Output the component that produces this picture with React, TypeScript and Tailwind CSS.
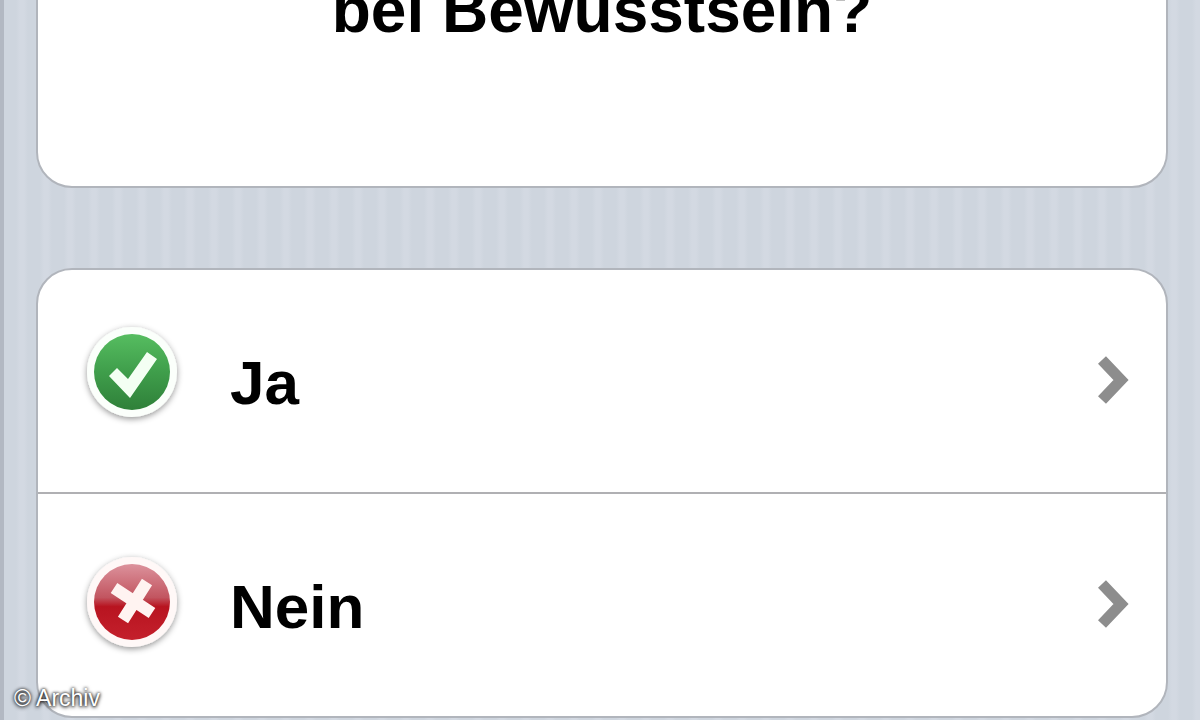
import { ReactNode } from "react";

function CheckIcon() {
  return (
    <svg viewBox="2 7 104 104" className="size-26 shrink-0 overflow-visible" aria-hidden="true">
      <defs>
        <linearGradient id="green" x1="0" y1="0" x2="0" y2="1">
          <stop offset="0" stopColor="#56bd60" />
          <stop offset="0.5" stopColor="#3f9e4b" />
          <stop offset="1" stopColor="#2f8039" />
        </linearGradient>
        <filter id="shadow" x="-20%" y="-20%" width="140%" height="140%">
          <feDropShadow dx="0" dy="2" stdDeviation="3" floodColor="#000" floodOpacity="0.42" />
        </filter>
      </defs>
      <circle cx="52" cy="50" r="45" fill="#fbfffb" filter="url(#shadow)" />
      <circle cx="52" cy="50" r="38" fill="url(#green)" />
      <path d="M29 54 L37 46 L48 57 L67 30 L77 37 L50 76 Z" fill="#f3fff3" />
    </svg>
  );
}

function CrossIcon() {
  return (
    <svg viewBox="2 1 104 104" className="size-26 shrink-0 overflow-visible" aria-hidden="true">
      <defs>
        <linearGradient id="red" x1="0" y1="0" x2="0" y2="1">
          <stop offset="0" stopColor="#dc929c" />
          <stop offset="0.44" stopColor="#c25560" />
          <stop offset="0.56" stopColor="#b81420" />
          <stop offset="1" stopColor="#c4202c" />
        </linearGradient>
      </defs>
      <circle cx="52" cy="50" r="45" fill="#fff8f7" filter="url(#shadow)" />
      <circle cx="52" cy="50" r="38" fill="url(#red)" />
      <path d="M34 36 L72 61 M67 30 L43 68" fill="none" stroke="#fff3f1" strokeWidth="12" />
    </svg>
  );
}

function Chevron() {
  return (
    <svg viewBox="0 1 36 52" className="h-13 w-9 shrink-0" aria-hidden="true">
      <path d="M4 6 L23 26 L4 46" fill="none" stroke="#8d8d8d" strokeWidth="11" />
    </svg>
  );
}

function Answer({ icon, children }: { icon: ReactNode; children: ReactNode }) {
  return (
    <li>
      <button type="button" className="flex h-[222px] w-full items-center pr-8 pl-11 text-left">
        {icon}
        <span className="grow pt-1 pl-11 text-[62px] leading-18 font-bold">{children}</span>
        <Chevron />
      </button>
    </li>
  );
}

export default function App() {
  return (
    <div className="relative min-h-screen overflow-hidden border-l-4 border-[#b2b8c2] bg-[#d0d6df] bg-[repeating-linear-gradient(90deg,#ced5de_0px,#ced5de_12px,#d3d9e2_16px,#d3d9e2_20px,#ced5de_24px)] pr-8 pl-8 font-['Liberation_Sans',Arial,sans-serif] text-black">
      <main className="-mt-10 flex flex-col gap-20">
        <section className="rounded-b-[36px] border-2 border-[#b1b5bc] bg-white pt-2 pb-34">
          <h1 className="text-center text-[64px] leading-20 font-bold">bei Bewusstsein?</h1>
        </section>
        <ul className="divide-y-2 divide-[#b0b0b3] rounded-[36px] border-2 border-[#b1b5bc] bg-white">
          <Answer icon={<CheckIcon />}>Ja</Answer>
          <Answer icon={<CrossIcon />}>Nein</Answer>
        </ul>
      </main>
      <small className="absolute bottom-2 left-2.5 text-[23px] leading-7 text-white [text-shadow:0_0_3px_#000,0_1px_4px_#000]">
        © Archiv
      </small>
    </div>
  );
}
